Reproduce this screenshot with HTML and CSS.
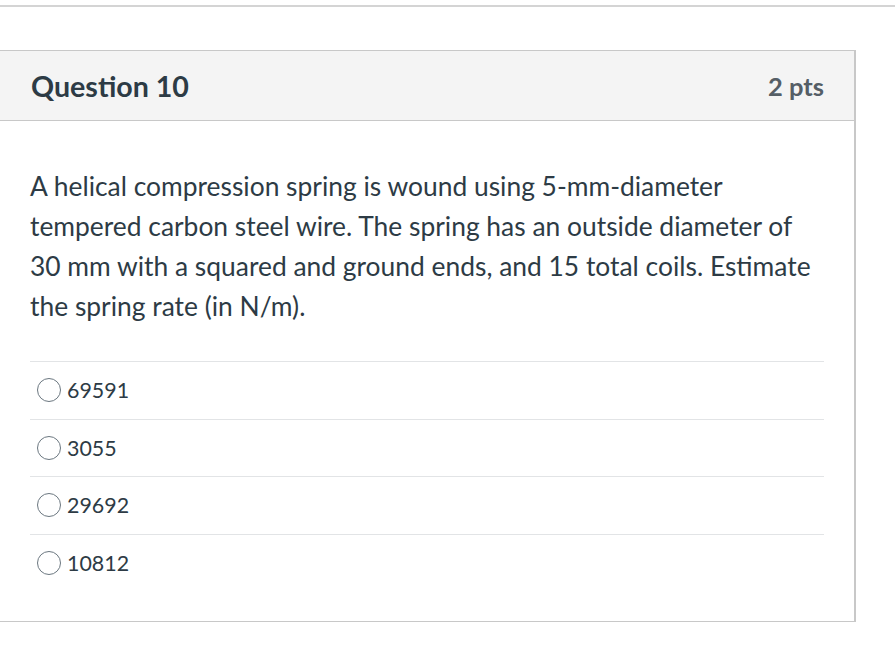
FILE: index.html
```html
<!DOCTYPE html>
<html>
<head>
<meta charset="utf-8">
<link rel="stylesheet" href="styles.css">
</head>
<body>
<div class="topline"></div>
<div class="card">
  <div class="card-header">
    <h2 class="title">Question 10</h2>
    <span class="pts">2 pts</span>
  </div>
  <div class="card-body">
    <p class="question">A helical compression spring is wound using 5-mm-diameter tempered carbon steel wire. The spring has an outside diameter of 30 mm with a squared and ground ends, and 15 total coils. Estimate the spring rate (in N/m).</p>
    <div class="answers">
      <label class="answer"><span class="radio"></span><span class="answer-text">69591</span></label>
      <label class="answer"><span class="radio"></span><span class="answer-text">3055</span></label>
      <label class="answer"><span class="radio"></span><span class="answer-text">29692</span></label>
      <label class="answer"><span class="radio"></span><span class="answer-text">10812</span></label>
    </div>
  </div>
</div>
</body>
</html>
```
FILE: styles.css
```css
html, body {
  margin: 0;
  padding: 0;
  background: #ffffff;
}
body {
  font-family: Lato, "Open Sans", sans-serif;
  color: #2d3b45;
  width: 896px;
  height: 648px;
  overflow: hidden;
}
.topline {
  width: 895px;
  height: 5px;
  border-bottom: 2px solid #d4d4d4;
}
.card {
  margin-top: 43px;
  margin-left: -1px;
  width: 857px;
  box-sizing: border-box;
  border: 1px solid #c8c8c8;
  border-right-width: 2px;
  background: #fff;
}
.card-header {
  display: flex;
  align-items: center;
  justify-content: space-between;
  height: 69px;
  padding: 0 30px 0 31px;
  background: #f4f4f4;
  border-bottom: 1px solid #c8c8c8;
}
.title {
  margin: 0;
  font-size: 28.6px;
  font-weight: 700;
  color: #2d3b45;
}
.pts {
  font-size: 25.5px;
  font-weight: 700;
  color: #555e66;
}
.card-body {
  padding: 45px 30px 30px 30px;
}
.question {
  margin: 0 0 35px;
  font-size: 26.4px;
  line-height: 40px;
  color: #2d3b45;
}
.answers {
  display: flex;
  flex-direction: column;
}
.answer {
  display: flex;
  align-items: center;
  height: 56.5px;
  border-top: 1px solid #e2e4e6;
  padding-left: 7px;
  gap: 6px;
}
.radio {
  width: 24px;
  height: 24px;
  border: 1px solid #6b7780;
  border-radius: 50%;
  box-sizing: border-box;
  flex: none;
  background: #fff;
}
.answer-text {
  font-size: 21.4px;
  color: #2d3b45;
}
```
